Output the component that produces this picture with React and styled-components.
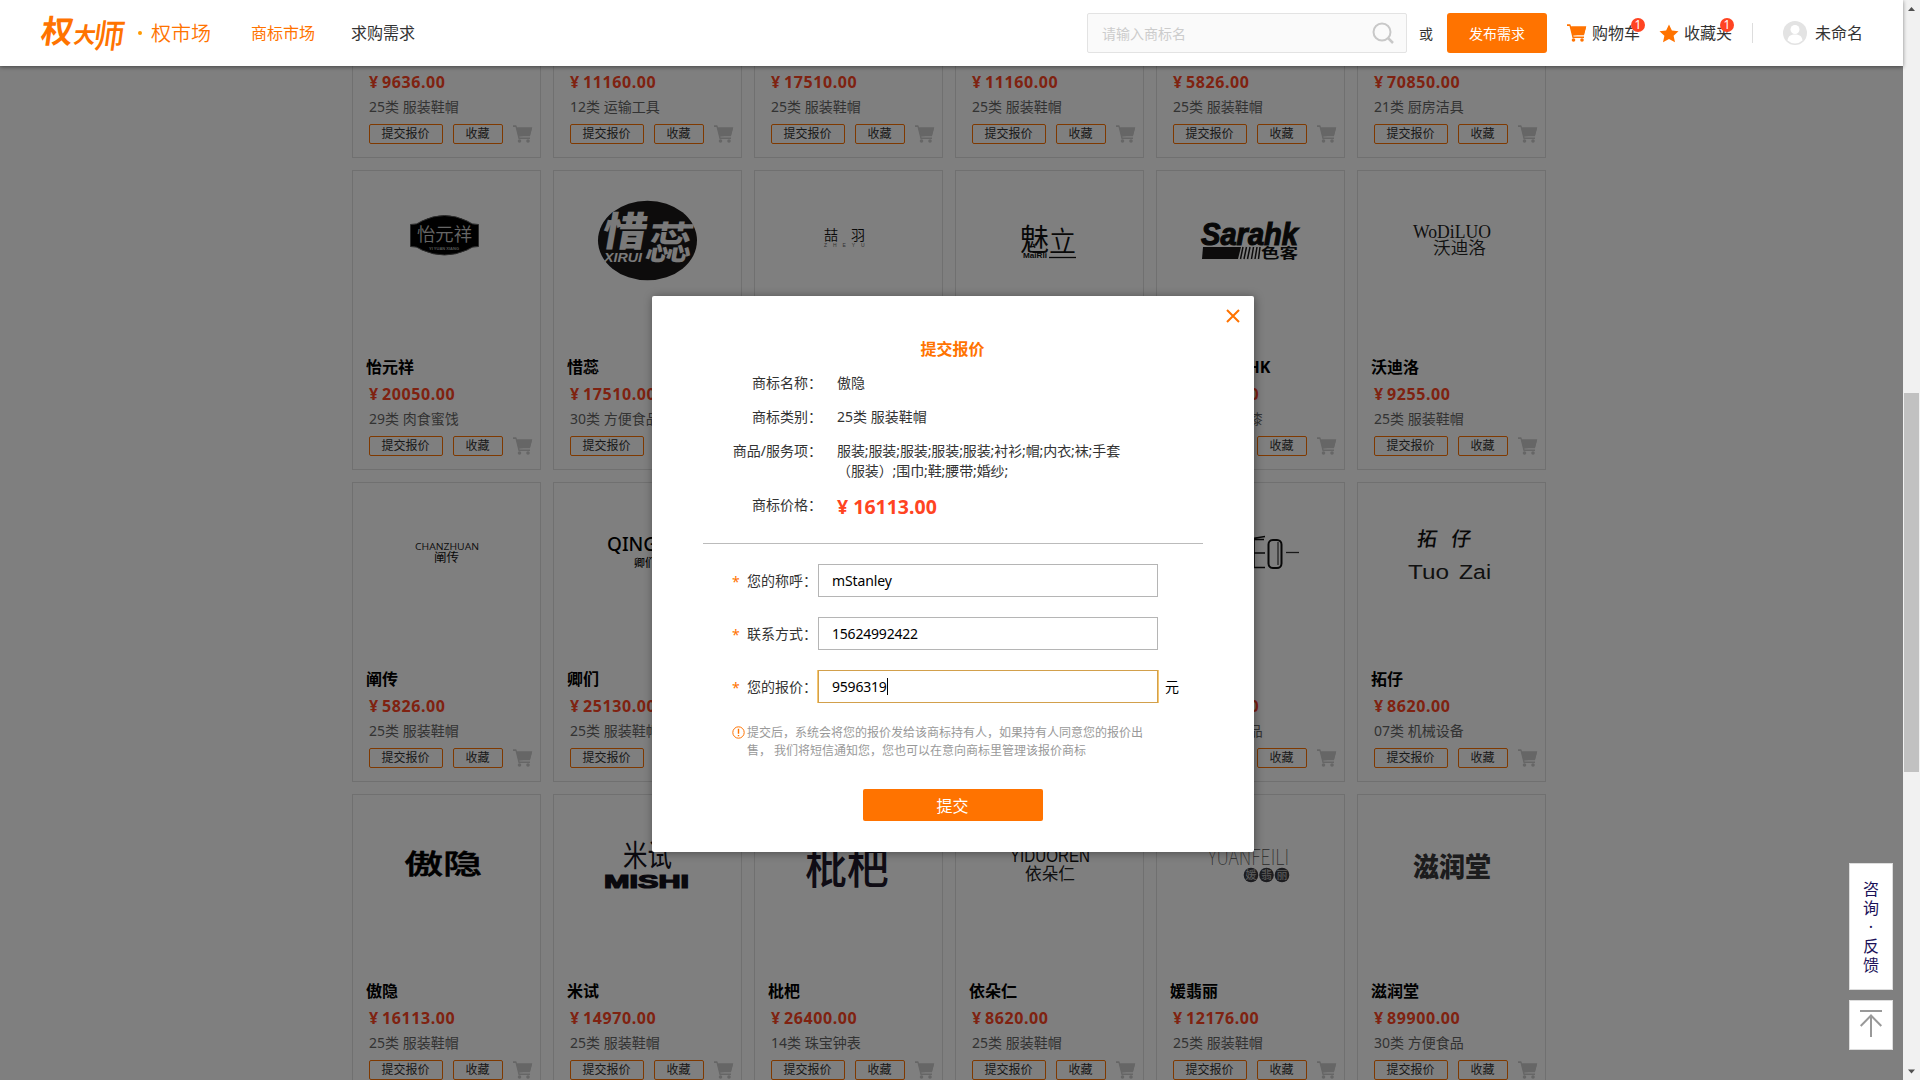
import React from 'react';
import styled, { createGlobalStyle, css } from 'styled-components';

const SANS = '"Noto Sans", "Noto Sans CJK SC", sans-serif';
const CJK = '"Noto Sans CJK SC", sans-serif';
const ORANGE = '#ff7300';
const RED = '#ff4422';

const GlobalStyle = createGlobalStyle`
  * { box-sizing: border-box; }
  html, body { margin: 0; padding: 0; height: 1080px; overflow: hidden; }
  body { font-family: ${SANS}; font-size: 14px; color: #333; background: #fff; }
  button, input { font-family: inherit; margin: 0; }
`;

const Screen = styled.div`
  display: flex;
  width: 1920px;
  height: 1080px;
  overflow: hidden;
`;

const Page = styled.div`
  position: relative;
  display: flex;
  flex-direction: column;
  width: 1903px;
  height: 1080px;
`;

/* ---------- header ---------- */

const Header = styled.header`
  position: relative;
  z-index: 20;
  display: flex;
  align-items: center;
  flex: none;
  height: 66px;
  padding: 0 40px;
  background: #fff;
  box-shadow: 0 1px 4px rgba(0, 0, 0, 0.45);
`;

const Brand = styled.a`
  display: flex;
  align-items: center;
  width: 211px;
  color: ${ORANGE};
  svg { overflow: visible; }
`;

const BrandDot = styled.i`
  width: 4px;
  height: 4px;
  margin: 0 9px 0 12px;
  border-radius: 50%;
  background: #ff9a00;
`;

const BrandName = styled.span`
  font: 300 20px/30px ${CJK};
  font-weight: 350;
`;

const NavLink = styled.a`
  margin-right: 36px;
  font-size: 16px;
  line-height: 24px;
  color: ${(p) => (p.$active ? ORANGE : '#333')};
`;

const SearchBox = styled.div`
  display: flex;
  align-items: center;
  justify-content: space-between;
  width: 320px;
  height: 40px;
  margin-left: auto;
  padding: 0 12px 0 14px;
  border: 1px solid #e3e3e3;
  border-radius: 2px;
  background: #fafafa;
  color: #ccc;
`;

const Or = styled.span`
  width: 40px;
  padding-right: 2px;
  text-align: center;
`;

const PublishButton = styled.button`
  width: 100px;
  height: 40px;
  padding: 0;
  border: 0;
  border-radius: 3px;
  background: ${ORANGE};
  color: #fff;
  font-size: 14px;
`;

const HeaderItem = styled.a`
  position: relative;
  display: flex;
  align-items: center;
  width: ${(p) => p.$width}px;
  margin-left: ${(p) => p.$gap}px;
  font-size: 16px;
  line-height: 24px;
  white-space: nowrap;
  svg { flex: none; margin-right: ${(p) => p.$iconGap || 5}px; }
`;

const Badge = styled.span`
  position: absolute;
  top: -3px;
  right: ${(p) => p.$right}px;
  width: 14px;
  height: 14px;
  border-radius: 50%;
  background: ${RED};
  color: #fff;
  font-size: 12px;
  line-height: 14px;
  text-align: center;
`;

const HeaderRule = styled.i`
  width: 1px;
  height: 20px;
  margin-left: 20px;
  background: #ddd;
`;

/* ---------- cards ---------- */

const Viewport = styled.main`
  flex: 1;
  min-height: 0;
  overflow: hidden;
`;

const Grid = styled.div`
  display: grid;
  grid-template-columns: repeat(6, 189px);
  grid-auto-rows: 300px;
  gap: 12px;
  margin: -208px 0 0 352px;
`;

const Card = styled.article`
  display: flex;
  flex-direction: column;
  border: 1px solid #e0e0e0;
  background: #fff;
  overflow: hidden;
`;

const Mark = styled.svg`
  display: block;
  flex: none;
  width: 187px;
  height: 184px;
`;

const CardTitle = styled.h3`
  margin: 0 0 0 13px;
  font-size: 16px;
  font-weight: 700;
  line-height: 24px;
  color: #000;
  white-space: nowrap;
`;

const CardPrice = styled.div`
  display: flex;
  margin-left: 16px;
  font-size: 16px;
  font-weight: 700;
  line-height: 30px;
  letter-spacing: 0.6px;
  color: ${RED};
`;

const Yen = styled.span`
  width: 13px;
`;

const CardCategory = styled.div`
  margin-left: 16px;
  line-height: 20px;
  color: #666;
`;

const CardActions = styled.div`
  display: flex;
  align-items: flex-start;
  gap: 10px;
  margin: 7px 0 0 16px;
  svg { margin-top: 1px; }
`;

const SmallButton = styled.button`
  width: ${(p) => p.$width}px;
  height: 20px;
  padding: 0 1px 0 0;
  border: 1px solid ${ORANGE};
  border-radius: 2px;
  background: #fff;
  color: #333;
  font-size: 12px;
  line-height: 18px;
`;

/* ---------- dialog ---------- */

const Overlay = styled.div`
  position: absolute;
  inset: 0;
  z-index: 10;
  padding: 296px 0 0 652px;
  background: rgba(0, 0, 0, 0.5);
`;

const Dialog = styled.section`
  position: relative;
  display: flex;
  flex-direction: column;
  width: 602px;
  height: 556px;
  padding: 41px 51px 0;
  border-radius: 2px;
  background: #fff;
  box-shadow: 1px 1px 10px rgba(0, 0, 0, 0.4);
`;

const CloseIcon = styled.svg`
  position: absolute;
  top: 12px;
  right: 13px;
`;

const DialogTitle = styled.h2`
  margin: 0 1px 9px 0;
  font-size: 16px;
  font-weight: 700;
  line-height: 24px;
  text-align: center;
  color: ${ORANGE};
`;

const Facts = styled.dl`
  display: grid;
  grid-template-columns: 119px 290px;
  column-gap: 15px;
  row-gap: 14px;
  margin: 3px 0 0;
  line-height: 20px;
  dt { text-align: right; white-space: nowrap; }
  dd { margin: 0; }
`;

const Goods = styled.dd`
  letter-spacing: -0.1px;
`;

const BigPrice = styled.dd`
  padding-top: 2px;
  font-size: 19.5px;
  font-weight: 700;
  line-height: 20px;
  color: ${RED};
`;

const Divider = styled.hr`
  width: 100%;
  height: 1px;
  margin: 26px 0 20px;
  border: 0;
  background: #bbb;
`;

const FormRow = styled.label`
  display: flex;
  align-items: center;
  height: 33px;
  margin: 0 0 20px 29px;
  white-space: nowrap;
`;

const Star = styled.span`
  width: 15px;
  padding-top: 1px;
  color: ${ORANGE};
`;

const LabelText = styled.span`
  width: 71px;
  padding-bottom: 2px;
`;

const Field = styled.span`
  display: flex;
  align-items: center;
  width: 340px;
  height: 33px;
  padding-left: 13px;
  border: 1px solid #b5b5b5;
  background: #fff;
  color: #000;
  letter-spacing: ${(p) => (p.$numeric ? '-0.2px' : '-0.1px')};
  ${(p) => p.$focused && css`
    border-color: #d2a04c;
    box-shadow: 1px 0 0 #f7c76e, -1px 0 0 #f7c76e;
  `}
`;

const Caret = styled.i`
  width: 1px;
  height: 17px;
  background: #000;
`;

const Unit = styled.span`
  margin-left: 7px;
  padding-bottom: 2px;
  color: #000;
`;

const Notice = styled.div`
  display: flex;
  margin: 1px 0 0 29px;
  font-size: 12px;
  line-height: 18px;
  color: #999;
  svg { flex: none; margin: 2px 2px 0 0; }
`;

const NoticeText = styled.p`
  width: 398px;
  margin: 0;
`;

const SubmitButton = styled.button`
  align-self: center;
  width: 180px;
  height: 32px;
  margin-top: 29px;
  padding: 0 1px 0 0;
  border: 0;
  border-radius: 2px;
  background: ${ORANGE};
  color: #fff;
  font-size: 16px;
`;

/* ---------- floating tools and scrollbar ---------- */

const SideTools = styled.aside`
  position: absolute;
  z-index: 15;
  right: 10px;
  top: 863px;
  display: flex;
  flex-direction: column;
  gap: 10px;
`;

const SideBox = styled.a`
  display: flex;
  flex-direction: column;
  align-items: center;
  width: 44px;
  height: ${(p) => p.$height}px;
  padding-top: ${(p) => p.$top}px;
  border: 1px solid #ddd;
  background: #fff;
  font-size: 16px;
  line-height: 19px;
  color: #1c1259;
`;

const Scrollbar = styled.div`
  display: flex;
  flex-direction: column;
  align-items: center;
  width: 17px;
  height: 1080px;
  background: #f1f1f1;
`;

const Thumb = styled.i`
  width: 15px;
  height: 379px;
  margin: 376px 0 291px;
  background: #c1c1c1;
`;

const Cart = ({ color }) => (
  <svg width="20" height="18" viewBox="0 0 20 18" fill={color}>
    <path d="M0 0.3H3.2L4.2 2.4H19.2L17 10.2L6.2 11.4L6.6 12.400H17V14.1H5.5L2.5 2H0Z" />
    <path d="M4.200 2.400H19.200L17 11.200H6Z" />
    <circle cx="6.500" cy="16" r="1.800" />
    <circle cx="15" cy="16" r="1.800" />
  </svg>
);

const T = ({ x, y, s, w, f = CJK, b = 400, c = '#111', children, ...rest }) => (
  <text
    x={x}
    y={y}
    fontSize={s}
    fontFamily={f}
    fontWeight={b}
    fill={c}
    textLength={w}
    lengthAdjust={w ? 'spacingAndGlyphs' : undefined}
    {...rest}
  >
    {children}
  </text>
);

const SERIF = '"Liberation Serif", serif';
const ARIAL = '"Liberation Sans", sans-serif';

const marks = {
  yiyuanxiang: (
    <>
      <path d="M57.5 53.5Q64 54 69 50Q80 44.5 91.500 44.500Q103 44.500 114 50Q119 54 125.500 53.500V75.500Q119 75 114 79Q103 84 91.500 84Q80 84 69 79Q64 75 57.500 75.500Z" fill="#000" stroke="#555" strokeWidth="1" />
      <T x={64} y={70} s={18} w={55} b={350} c="#ccc">怡元祥</T>
      <T x={76} y={78.500} s={4} w={30} f={ARIAL} b={700} c="#aaa">YI YUAN XIANG</T>
    </>
  ),
  xirui: (
    <>
      <ellipse cx="93.500" cy="69.500" rx="49.500" ry="39.800" fill="#1b1818" />
      <g transform="skewX(-10)">
        <T x={60} y={75} s={40} w={44} b={900} c="#f4f4f4">惜</T>
        <T x={106} y={88} s={44} w={46} b={700} c="#f4f4f4">蕊</T>
      </g>
      <T x={50} y={91} s={13} w={38} f={ARIAL} b={700} c="#f4f4f4" fontStyle="italic">XIRUI</T>
    </>
  ),
  zheyu: (
    <>
      <T x={69} y={68.500} s={14} b={350}>喆</T>
      <T x={96} y={68.500} s={14} b={350}>羽</T>
      <T x={69} y={75.500} s={5} f={ARIAL} c="#666" letterSpacing="5.900">ZHEYU</T>
    </>
  ),
  meili: (
    <>
      <T x={64} y={79} s={30} w={29} b={400}>魅</T>
      <T x={93} y={81} s={28} w={27} b={350}>立</T>
      <path d="M93 86.500H120" stroke="#111" strokeWidth="1.300" />
      <T x={67} y={86.500} s={7} w={24} f={ARIAL} b={700}>MaiRli</T>
    </>
  ),
  sarahk: (
    <>
      <T x={44} y={74} s={32} w={97} f={ARIAL} b={700} fontStyle="italic" stroke="#111" strokeWidth="1.200">Sarahk</T>
      <path d="M46 76H84L81 88H45Z" fill="#1b1818" />
      <path d="M86 76L83.500 88M89.500 76L87 88M93 76L90.500 88M96.500 76L94.500 88M100 76L98 88M103 76L101.500 88" stroke="#1b1818" strokeWidth="1.500" />
      <T x={104} y={87} s={13.500} w={37} b={700}>色客</T>
    </>
  ),
  wodiluo: (
    <>
      <T x={55} y={67} s={18.500} w={78} f={SERIF} c="#222">WoDiLUO</T>
      <T x={75} y={83} s={17.500} w={53} b={350} c="#222">沃迪洛</T>
    </>
  ),
  chanzhuan: (
    <>
      <T x={62} y={67} s={9.500} w={64} f={'"Open Sans", sans-serif'} c="#222">CHANZHUAN</T>
      <T x={81} y={79} s={12} w={25} c="#111">阐传</T>
    </>
  ),
  qingmen: (
    <>
      <T x={53} y={67.500} s={19} f={SANS} b={500} c="#000">QINGMEN</T>
      <T x={80} y={83.500} s={11} b={500}>卿们</T>
    </>
  ),
  maokou: (
    <g fill="none" stroke="#111">
      <path d="M86 57L108 53.500M84 56.500H107M86 70H108M86 84.500H108M97 56V84.500" strokeWidth="1.600" />
      <rect x="111.500" y="57" width="13" height="28" rx="4.500" strokeWidth="2" />
      <path d="M121 59V82" strokeWidth="1" />
      <path d="M129 69.500H142" strokeWidth="1.300" stroke="#333" />
    </g>
  ),
  tuozai: (
    <>
      <T x={67} y={63} s={20} b={500} transform="skewX(-8)">拓</T>
      <T x={101} y={63} s={20} b={500} transform="skewX(-8)">仔</T>
      <T x={50} y={96} s={20.500} w={41} f={ARIAL} c="#222">Tuo</T>
      <T x={101} y={96} s={20.500} w={32} f={ARIAL} c="#222">Zai</T>
    </>
  ),
  aoyin: <T x={51} y={79} s={27} w={78} b={500} c="#000" stroke="#000" strokeWidth="0.500">傲隐</T>,
  mishi: (
    <>
      <T x={69} y={71} s={30} w={49} b={400} c="#15131c">米试</T>
      <T x={50} y={93} s={18} w={85} f={ARIAL} b={700} c="#15131c" stroke="#15131c" strokeWidth="1.200">MISHI</T>
    </>
  ),
  pipa: <T x={50} y={89} s={44} w={84} b={500} c="#21182a">枇杷</T>,
  yiduoren: (
    <>
      <T x={54} y={66.500} s={18} w={80} f={ARIAL} c="#111">YIDUOREN</T>
      <T x={69} y={85} s={16.500} w={50} c="#222">依朵仁</T>
    </>
  ),
  yuanfeili: (
    <>
      <T x={51} y={70} s={21} w={81} f={CJK} b={100} c="#555">YUANFEILI</T>
      {['媛', '翡', '丽'].map((ch, i) => (
        <g key={ch}>
          <circle cx={94 + i * 15.500} cy="80" r="7.300" fill="#3a3a40" />
          <T x={88.500 + i * 15.500} y={84} s={11} c="#bbb">{ch}</T>
        </g>
      ))}
    </>
  ),
  zirun: <T x={55} y={81.500} s={27} w={78} b={900} c="#38383a">滋润堂</T>,
};

const cards = [
  ['', '9636.00', '25类 服装鞋帽'],
  ['', '11160.00', '12类 运输工具'],
  ['', '17510.00', '25类 服装鞋帽'],
  ['', '11160.00', '25类 服装鞋帽'],
  ['', '5826.00', '25类 服装鞋帽'],
  ['', '70850.00', '21类 厨房洁具'],
  ['怡元祥', '20050.00', '29类 肉食蜜饯', 'yiyuanxiang'],
  ['惜蕊', '17510.00', '30类 方便食品', 'xirui'],
  ['喆羽', '9636.00', '25类 服装鞋帽', 'zheyu'],
  ['魅立', '9636.00', '25类 服装鞋帽', 'meili'],
  ['色客 SARAHK', '12430.00', '02类 颜料油漆', 'sarahk'],
  ['沃迪洛', '9255.00', '25类 服装鞋帽', 'wodiluo'],
  ['阐传', '5826.00', '25类 服装鞋帽', 'chanzhuan'],
  ['卿们', '25130.00', '25类 服装鞋帽', 'qingmen'],
  ['', '8620.00', '25类 服装鞋帽'],
  ['', '8620.00', '25类 服装鞋帽'],
  ['', '14970.00', '30类 方便食品', 'maokou'],
  ['拓仔', '8620.00', '07类 机械设备', 'tuozai'],
  ['傲隐', '16113.00', '25类 服装鞋帽', 'aoyin'],
  ['米试', '14970.00', '25类 服装鞋帽', 'mishi'],
  ['枇杷', '26400.00', '14类 珠宝钟表', 'pipa'],
  ['依朵仁', '8620.00', '25类 服装鞋帽', 'yiduoren'],
  ['媛翡丽', '12176.00', '25类 服装鞋帽', 'yuanfeili'],
  ['滋润堂', '89900.00', '30类 方便食品', 'zirun'],
];

const TrademarkCard = ({ name, price, category, mark }) => (
  <Card>
    <Mark viewBox="0 0 187 184">{marks[mark]}</Mark>
    <CardTitle>{name || '\u00a0'}</CardTitle>
    <CardPrice><Yen>¥</Yen>{price}</CardPrice>
    <CardCategory>{category}</CardCategory>
    <CardActions>
      <SmallButton $width={74}>提交报价</SmallButton>
      <SmallButton $width={50}>收藏</SmallButton>
      <Cart color="#ccc" />
    </CardActions>
  </Card>
);

export default function App() {
  return (
    <Screen>
      <GlobalStyle />
      <Page>
        <Header>
          <Brand>
            <svg width="86" height="42" viewBox="0 0 86 42">
              <g fill={ORANGE} fontFamily={CJK} transform="skewX(-8)">
                <text x="4" y="30.500" fontSize="32" fontWeight="700">权</text>
                <text x="37" y="31" fontSize="22" fontWeight="700">大</text>
                <text x="57" y="36" fontSize="33" fontWeight="500" textLength="31" lengthAdjust="spacingAndGlyphs">师</text>
              </g>
            </svg>
            <BrandDot />
            <BrandName>权市场</BrandName>
          </Brand>
          <NavLink $active>商标市场</NavLink>
          <NavLink>求购需求</NavLink>
          <SearchBox>
            请输入商标名
            <svg width="22" height="22" viewBox="0 0 22 22" fill="none" stroke="#c8c8c8" strokeWidth="2">
              <circle cx="10" cy="10" r="8.500" />
              <path d="M16 16L21 21" strokeWidth="2.500" />
            </svg>
          </SearchBox>
          <Or>或</Or>
          <PublishButton>发布需求</PublishButton>
          <HeaderItem $width={73} $gap={20} $iconGap={5}>
            <Cart color={ORANGE} />购物车<Badge $right={-5}>1</Badge>
          </HeaderItem>
          <HeaderItem $width={73} $gap={19} $iconGap={5}>
            <svg width="20" height="19" viewBox="0 0 20 19" fill={ORANGE}>
              <path d="M10 0.500L12.900 6.500L19.500 7.300L14.600 11.800L16 18.300L10 15L4 18.300L5.400 11.800L0.500 7.300L7.100 6.500Z" />
            </svg>
            收藏夹<Badge $right={-2}>1</Badge>
          </HeaderItem>
          <HeaderRule />
          <HeaderItem $width={80} $gap={30} $iconGap={8}>
            <svg width="24" height="24" viewBox="0 0 24 24">
              <circle cx="12" cy="12" r="12" fill="#e3e3e3" />
              <circle cx="12" cy="8.500" r="4.500" fill="#fff" />
              <path d="M4.500 19.500C5 15 8 13.500 12 13.500S19 15 19.500 19.500Q16 22.500 12 22.500T4.500 19.500Z" fill="#fff" />
            </svg>
            未命名
          </HeaderItem>
        </Header>

        <Viewport>
          <Grid>
            {cards.map(([name, price, category, mark], i) => (
              <TrademarkCard key={i} name={name} price={price} category={category} mark={mark} />
            ))}
          </Grid>
        </Viewport>

        <Overlay>
          <Dialog>
            <CloseIcon width="16" height="16" viewBox="0 0 16 16" stroke={ORANGE} strokeWidth="2">
              <path d="M2 2L14 14M14 2L2 14" />
            </CloseIcon>
            <DialogTitle>提交报价</DialogTitle>
            <Facts>
              <dt>商标名称：</dt>
              <dd>傲隐</dd>
              <dt>商标类别：</dt>
              <dd>25类 服装鞋帽</dd>
              <dt>商品/服务项：</dt>
              <Goods>服装;服装;服装;服装;服装;衬衫;帽;内衣;袜;手套<br />（服装）;围巾;鞋;腰带;婚纱;</Goods>
              <dt>商标价格：</dt>
              <BigPrice>¥ 16113.00</BigPrice>
            </Facts>
            <Divider />
            <FormRow>
              <Star>*</Star><LabelText>您的称呼：</LabelText>
              <Field>mStanley</Field>
            </FormRow>
            <FormRow>
              <Star>*</Star><LabelText>联系方式：</LabelText>
              <Field $numeric>15624992422</Field>
            </FormRow>
            <FormRow>
              <Star>*</Star><LabelText>您的报价：</LabelText>
              <Field $numeric $focused>9596319<Caret /></Field>
              <Unit>元</Unit>
            </FormRow>
            <Notice>
              <svg width="13" height="13" viewBox="0 0 13 13" fill="none" stroke={ORANGE}>
                <circle cx="6.500" cy="6.500" r="5.700" strokeWidth="1" />
                <path d="M6.500 2.800V7.800M6.500 9V10.300" strokeWidth="1.400" />
              </svg>
              <NoticeText>
                提交后，系统会将您的报价发给该商标持有人，如果持有人同意您的报价出<br />售， 我们将短信通知您，您也可以在意向商标里管理该报价商标
              </NoticeText>
            </Notice>
            <SubmitButton>提交</SubmitButton>
          </Dialog>
        </Overlay>

        <SideTools>
          <SideBox $height={127} $top={16}>
            <span>咨</span><span>询</span><span>·</span><span>反</span><span>馈</span>
          </SideBox>
          <SideBox $height={50} $top={9}>
            <svg width="22" height="28" viewBox="0 0 22 28" fill="none" stroke="#999" strokeWidth="2">
              <path d="M0 1H22M11 5V27M0.700 16L11 5.500L21.300 16" />
            </svg>
          </SideBox>
        </SideTools>
      </Page>
      <Scrollbar>
        <svg width="17" height="17" viewBox="0 0 17 17"><path d="M5 11L8.500 7L12 11Z" fill="#505050" /></svg>
        <Thumb />
        <svg width="17" height="17" viewBox="0 0 17 17"><path d="M5 6.500L8.500 10.500L12 6.500Z" fill="#505050" /></svg>
      </Scrollbar>
    </Screen>
  );
}
